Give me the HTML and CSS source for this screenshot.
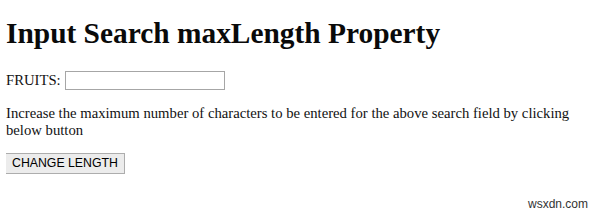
FILE: index.html
```html
<!DOCTYPE html>
<html>
<head>
  <title>Input Search maxLength Property</title>
  <link rel="stylesheet" href="styles.css">
</head>
<body>
  <h1 class="page-heading">Input Search maxLength Property</h1>
  <form class="fruit-form">
    <label for="fruitSearch">FRUITS:</label>
    <input type="search" id="fruitSearch" class="search-input" maxlength="5">
  </form>
  <p class="info-text">Increase the maximum number of characters to be entered for the above search field by clicking below button</p>
  <button class="length-button" id="changeLengthButton">CHANGE LENGTH</button>
  <span class="watermark">wsxdn.com</span>

  <script>
    let changeLengthButton = document.getElementById("changeLengthButton");
    changeLengthButton.onclick = function() {
      document.getElementById("fruitSearch").maxLength = 15;
    };
  </script>
</body>
</html>
```

FILE: styles.css
```css
body {
  font-family: "Liberation Serif", "Times New Roman", serif;
  font-size: 14.7px;
  color: #000;
  background-color: #fff;
  margin: 7px 6px;
}

.page-heading {
  font-size: 29.4px;
  font-weight: bold;
  line-height: 34px;
  margin: 9px 0 0 0;
  color: #0a0a0a;
}

.fruit-form {
  display: flex;
  align-items: center;
  gap: 4px;
  height: 19px;
  margin-top: 21px;
  color: #111;
}

.search-input {
  box-sizing: border-box;
  width: 160px;
  height: 19px;
  padding: 0 2px;
  border: 1px solid #a6a6a6;
  margin: 0;
}

.info-text {
  margin: 14.7px 0 14px 0;
  line-height: 17px;
  color: #111;
}

.length-button {
  font-family: "Liberation Sans", Arial, sans-serif;
  font-size: 12.3px;
  line-height: 14px;
  padding: 2px 6px 3px 6px;
  margin-left: -1px;
  background-color: #ececec;
  border: 1px solid #adadad;
  border-radius: 0;
  color: #000;
}

.watermark {
  position: absolute;
  right: 12px;
  bottom: 4px;
  font-family: "Liberation Sans", Arial, sans-serif;
  font-size: 12px;
  color: #333;
}
```
